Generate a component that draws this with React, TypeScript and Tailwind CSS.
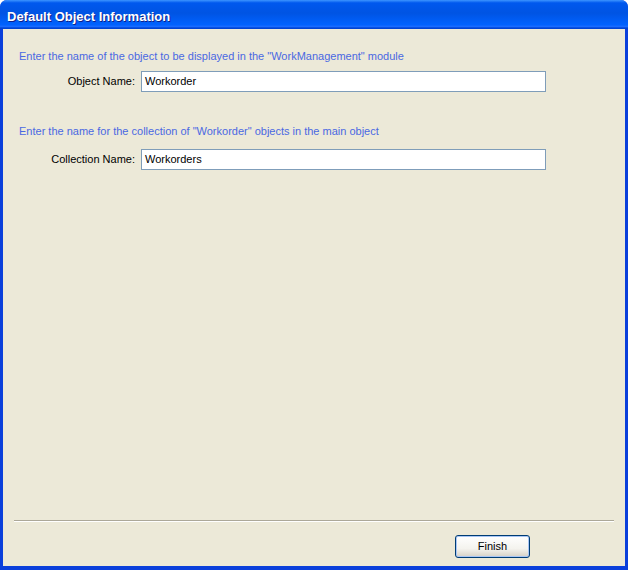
import React from 'react'

const font = { fontFamily: '"Liberation Sans", Tahoma, Arial, sans-serif' }

function Field({ label, value }: { label: string; value: string }) {
  return (
    <div className="flex items-center">
      <span className="w-[116px] shrink-0 text-right text-[11px] text-black">{label}</span>
      <div className="ml-[6px] flex h-[21px] w-[405px] items-center border border-[#7f9db9] bg-white px-[3px] text-[11px] text-black">
        {value}
      </div>
    </div>
  )
}

export default function App() {
  return (
    <div
      className="flex h-[570px] w-[628px] flex-col overflow-hidden rounded-t-[7px] bg-[#0a3fdb]"
      style={font}
    >
      <div className="flex h-[29px] shrink-0 items-center bg-[linear-gradient(180deg,#3d95ff,#0058ee_10%,#0054e3_45%,#0062ff_85%,#1a6cff_92%,#0046d8_96%,#0041d0)] pl-[7px] pt-[4px]">
        <span className="text-[13px] font-bold text-white [text-shadow:1px_1px_#0f1f89]">
          Default Object Information
        </span>
      </div>

      <div className="mb-[4px] ml-[3px] mr-[3px] flex flex-1 flex-col bg-[#ece9d8] px-[16px] pt-[21px]">
        <p className="text-[11px] leading-[13px] text-[#4a68e2]">
          Enter the name of the object to be displayed in the "WorkManagement" module
        </p>
        <div className="mt-[8px]">
          <Field label="Object Name:" value="Workorder" />
        </div>

        <p className="mt-[33px] text-[11px] leading-[13px] text-[#4a68e2]">
          Enter the name for the collection of "Workorder" objects in the main object
        </p>
        <div className="mt-[11px]">
          <Field label="Collection Name:" value="Workorders" />
        </div>

        <div className="flex-1" />

        <div className="-mx-[5px] border-t border-b border-t-[#aca899] border-b-white" />

        <div className="flex justify-end pb-[8px] pr-[79px] pt-[13px]">
          <button className="flex h-[23px] w-[75px] items-center justify-center rounded-[3px] border border-[#003c74] bg-[linear-gradient(180deg,#ffffff,#f4f3ee_60%,#d6d0c5)] text-[11px] text-black shadow-[inset_0_0_0_1px_#a9c6f5]">
            Finish
          </button>
        </div>
      </div>
    </div>
  )
}
